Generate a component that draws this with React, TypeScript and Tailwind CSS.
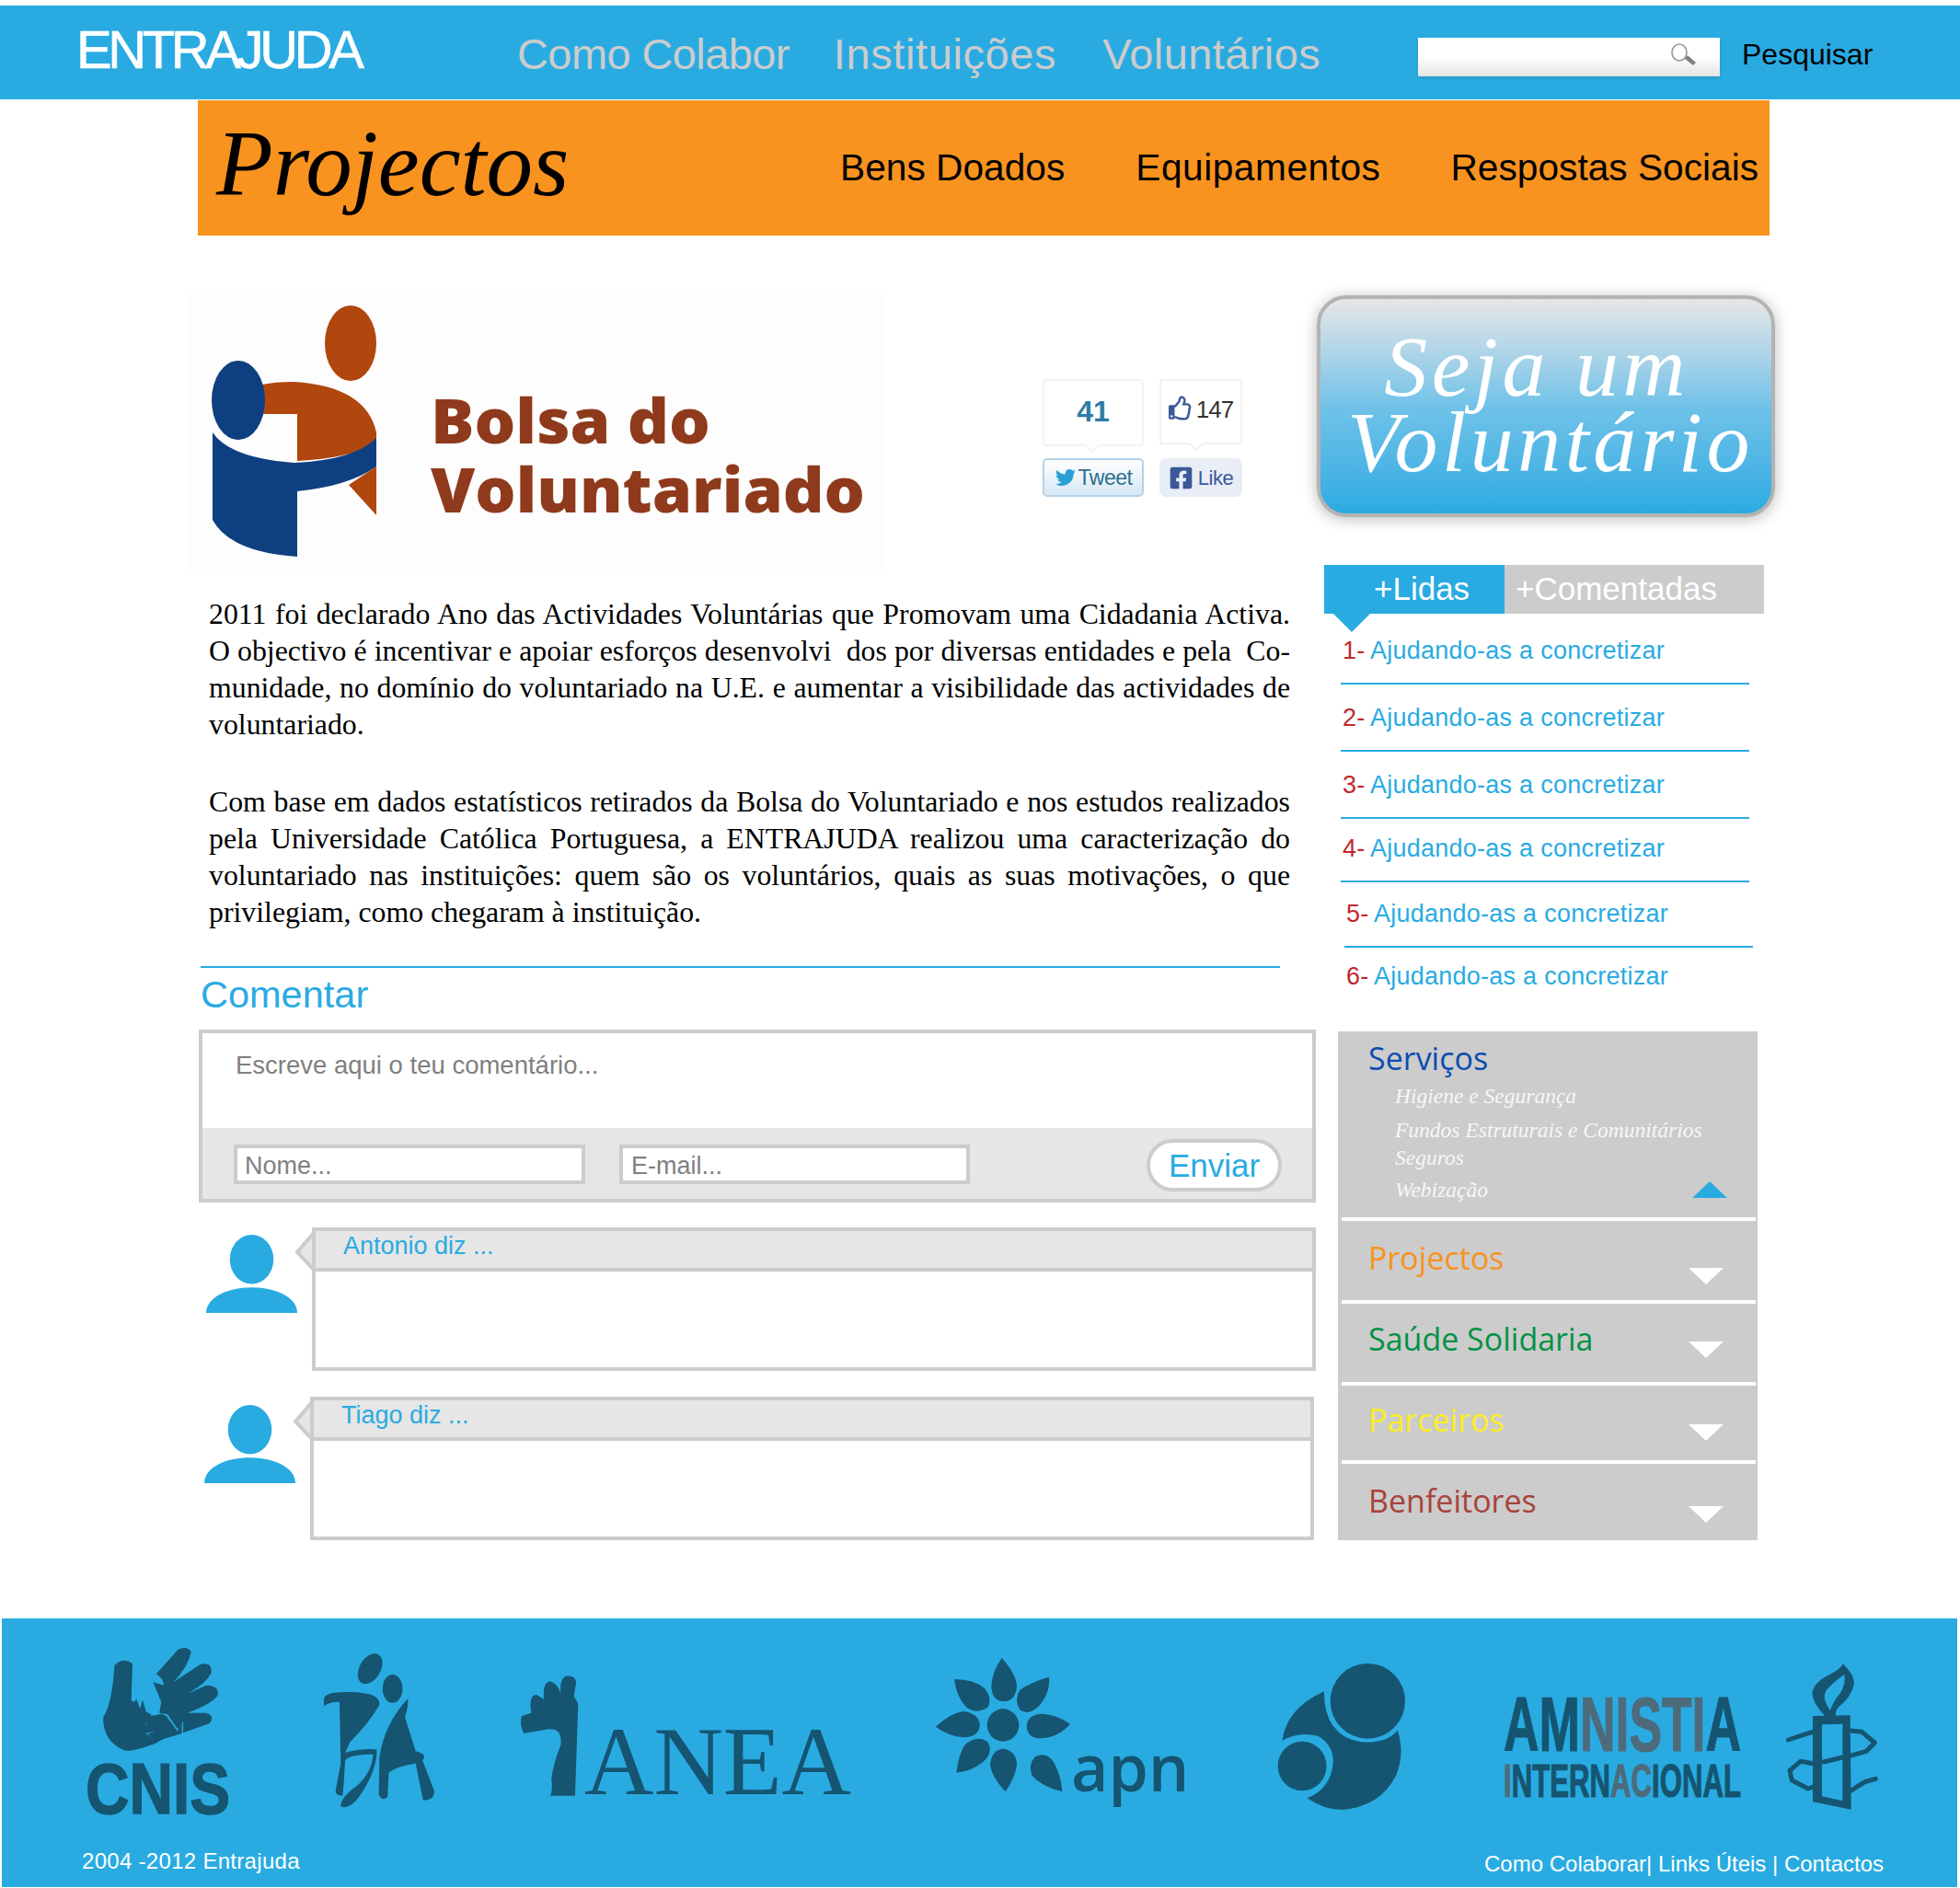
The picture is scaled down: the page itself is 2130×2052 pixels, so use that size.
import React from 'react';
import { FaTwitter, FaFacebookSquare, FaRegThumbsUp } from 'react-icons/fa';

const rankings = [
  { n: '1', row: 'h-[77px] pt-[23px] ml-0 border-b-2' },
  { n: '2', row: 'h-[73px] pt-[19px] ml-0 border-b-2' },
  { n: '3', row: 'h-[73px] pt-[19px] ml-0 border-b-2' },
  { n: '4', row: 'h-[69px] pt-[15px] ml-0 border-b-2' },
  { n: '5', row: 'h-[71px] pt-[17px] ml-[4px] border-b-2' },
  { n: '6', row: 'h-[91px] pt-[14px] ml-[4px]' },
];

const sections = [
  { title: 'Projectos', color: 'text-[#f7931e]', row: 'h-[90px] pt-[18px]', arrow: 'mt-[33px]' },
  { title: 'Saúde Solidaria', color: 'text-[#009245]', row: 'h-[89px] pt-[16px]', arrow: 'mt-[25px]' },
  { title: 'Parceiros', color: 'text-[#fcee21]', row: 'h-[85px] pt-[15px]', arrow: 'mt-[27px]' },
  { title: 'Benfeitores', color: 'text-[#a8433a]', row: 'h-[83px] pt-[18px]', arrow: 'mt-[28px]' },
];

const Person = ({ className }: { className: string }) => (
  <svg viewBox="0 0 100 90" preserveAspectRatio="none" className={className}>
    <ellipse cx="50" cy="28" rx="24" ry="28" fill="#29abe2" />
    <path d="M0 89C0 72 22 60 50 60S100 72 100 89Z" fill="#29abe2" />
  </svg>
);

const Comment = ({ author, className, avatar }: { author: string; className: string; avatar: string }) => (
  <div className={`flex items-start ${className}`}>
    <Person className={`w-[99px] h-[86px] shrink-0 ${avatar}`} />
    <div className="relative ml-[16px] w-[1091px]">
      <svg viewBox="0 0 24 48" className="absolute left-[-20px] top-0 w-[24px] h-[48px]">
        <path d="M22 2 L22 46 L4 27 L22 6" fill="#e6e6e6" stroke="#cccccc" strokeWidth="4" />
      </svg>
      <div className="h-[48px] border-4 border-[#cccccc] bg-[#e6e6e6] pl-[30px] text-[27px] leading-[32px] text-[#29abe2]">
        {author}
      </div>
      <div className="h-[108px] border-4 border-t-0 border-[#cccccc] bg-white" />
    </div>
  </div>
);

const BolsaLogo = () => (
  <svg viewBox="205 316 755 304" className="w-[755px] h-[304px] shrink-0 bg-[#fdfdfd]">
    <ellipse cx="381" cy="373" rx="28" ry="41" fill="#b0470f" />
    <path d="M240 440Q262 415 320 415Q398 420 409 470V482Q380 498 323 501V450H240Z" fill="#b0470f" />
    <path d="M231 470Q250 498 320 503Q385 500 409 476V507Q380 528 323 534V605Q250 600 231 565Z" fill="#0e3f80" />
    <path d="M409 507L379 527L409 560Z" fill="#b0470f" />
    <ellipse cx="259" cy="435" rx="29" ry="43" fill="#0e3f80" />
    <g fill="#8f3a1c" fontWeight="800" style={{ fontFamily: "'Open Sans', sans-serif" }}>
      <text x="468" y="482" fontSize="68" textLength="304" lengthAdjust="spacingAndGlyphs">Bolsa do</text>
      <text x="468" y="557" fontSize="68" textLength="472" lengthAdjust="spacingAndGlyphs">Voluntariado</text>
    </g>
  </svg>
);

const SocialButtons = () => (
  <div className="ml-[173px] mt-[96px] flex gap-[17px]">
    <div className="w-[110px]">
      <div className="relative h-[73px] rounded-[4px] border-2 border-[#eef5fa] pb-[4px] flex items-center justify-center text-[32px] leading-none font-bold text-[#2f7ca5]">
        41
        <span className="absolute bottom-[-7px] left-[46px] w-[12px] h-[12px] rotate-45 bg-white border-r-2 border-b-2 border-[#eef5fa]" />
      </div>
      <div className="mt-[13px] h-[42px] rounded-[5px] border-2 border-[#b5d2e6] bg-gradient-to-b from-white to-[#d6e7f3] flex items-center justify-center gap-[2px] text-[23px] tracking-[-0.5px] text-[#2d6f8f]">
        <FaTwitter className="text-[#2a9fd6] w-[24px] h-[22px]" />
        Tweet
      </div>
    </div>
    <div className="w-[90px]">
      <div className="relative h-[71px] border-2 border-[#f2f2f2] pt-[16px] flex justify-center gap-[4px] text-[26px] tracking-[-1px] leading-[30px] text-[#333333]">
        <FaRegThumbsUp className="text-[#3b5998] w-[26px] h-[27px]" />
        147
        <span className="absolute bottom-[-7px] left-[32px] w-[12px] h-[12px] rotate-45 bg-white border-r-2 border-b-2 border-[#f2f2f2]" />
      </div>
      <div className="mt-[15px] h-[42px] rounded-[7px] bg-[#e9edf6] flex items-center justify-center gap-[5px] text-[22px] tracking-[-0.5px] text-[#3b5998]">
        <FaFacebookSquare className="w-[27px] h-[27px]" />
        Like
      </div>
    </div>
  </div>
);

const paragraphs = [
  [
    '2011 foi declarado Ano das Actividades Voluntárias que Promovam uma Cidadania Activa.',
    'O objectivo é incentivar e apoiar esforços desenvolvi\u00a0\u00a0dos por diversas entidades e pela\u00a0 Co-',
    'munidade, no domínio do voluntariado na U.E. e aumentar a visibilidade das actividades de',
    'voluntariado.',
  ],
  [
    'Com base em dados estatísticos retirados da Bolsa do Voluntariado e nos estudos realizados',
    'pela Universidade Católica Portuguesa, a ENTRAJUDA realizou uma caracterização do',
    'voluntariado nas instituições: quem são os voluntários, quais as suas motivações, o que',
    'privilegiam, como chegaram à instituição.',
  ],
];

const FooterLogos = () => (
  <div className="flex items-start h-[240px]">
    {/* CNIS */}
    <svg viewBox="0 0 157 181" className="ml-[91px] mt-[32px] w-[157px] h-[181px] shrink-0 overflow-visible" fill="#155571">
      <g transform="translate(-93 -41) scale(.6793 .3333)">
        <path d="M183 180Q197 152 212 175L210 290Q214 310 218 288L224 322L228 292L234 332L242 340L233 372L248 395L233 402L252 432Q215 462 200 458Q165 430 165 350Q180 300 183 180Z" />
        <path d="M250 208L285 128Q298 115 306 135Q300 190 277 235L320 178Q340 165 338 205Q330 240 300 272L330 245Q352 245 348 280Q335 310 300 335L330 335Q345 345 335 370L293 400V362L285 390L268 340L255 335L258 300L245 235L262 245Q262 225 250 208Z" />
        <path d="M237 345L250 342L258 338L266 345L284 395L291 368L291 402L262 420L250 432L236 404L247 396L234 375Z" />
      </g>
      <text x="0" y="180" fontSize="78" fontWeight="700" stroke="#155571" strokeWidth="1.5" textLength="157" lengthAdjust="spacingAndGlyphs" style={{ fontFamily: "'Liberation Sans', sans-serif" }}>CNIS</text>
    </svg>
    {/* figuras */}
    <svg viewBox="518 142 177 503" preserveAspectRatio="none" className="ml-[102px] mt-[38px] w-[120px] h-[168px] shrink-0" fill="#155571">
      <ellipse cx="592" cy="192" rx="18" ry="50" transform="rotate(10 592 192)" />
      <ellipse cx="628" cy="257" rx="16" ry="46" />
      <path d="M518 290Q520 265 560 268Q610 270 607 310Q590 370 560 430L552 465Q580 450 603 455L602 470Q560 470 552 490L550 560L548 605Q535 605 537 585L545 500L543 300Q525 300 518 315Z" />
      <path d="M603 465Q600 540 570 620Q555 650 545 640Q545 610 570 575Q595 530 597 470Z" />
      <path d="M652 290Q655 300 648 350L665 460Q685 470 676 490L695 590Q695 620 677 620L665 500Q635 510 622 530L620 610Q610 625 606 600L607 480Q615 370 652 290Z" />
    </svg>
    {/* ANEA */}
    <svg viewBox="0 0 359 131" className="ml-[94px] mt-[62px] w-[359px] h-[131px] shrink-0 overflow-visible" fill="#155571">
      <g transform="translate(-566 -71) scale(.6793 .3333)">
        <path d="M905 215Q920 210 922 235L918 280L925 305L920 605H880Q885 590 882 550Q885 500 897 440Q900 385 878 388L838 402Q830 370 835 345L850 335Q845 280 858 275L870 290Q868 235 880 232Q892 240 897 270Q895 225 905 215Z" />
      </g>
      <text x="69" y="129" fontSize="106" textLength="290" lengthAdjust="spacingAndGlyphs" style={{ fontFamily: "'Liberation Serif', serif" }}>ANEA</text>
    </svg>
    {/* apn */}
    <svg viewBox="0 0 900 570" className="ml-[75px] mt-[31px] w-[300px] h-[190px] shrink-0 overflow-visible" fill="#155571">
      <path d="M266 36Q315 90 315 130Q310 178 272 178Q232 175 232 125Q235 80 266 36Z" />
      <path d="M420 98Q425 150 385 195Q350 225 325 205Q305 175 325 140Q360 115 420 98Z" />
      <path d="M489 252Q450 295 395 298Q350 300 347 258Q350 218 400 218Q450 222 489 252Z" />
      <path d="M463 472Q395 455 365 420Q350 385 375 358Q410 340 435 375Q460 420 463 472Z" />
      <path d="M278 472Q230 420 228 380Q235 333 272 332Q315 340 315 385Q310 425 278 472Z" />
      <path d="M118 410Q125 350 145 320Q185 285 220 310Q240 345 205 375Q170 405 118 410Z" />
      <path d="M50 260Q100 215 140 210Q190 215 195 255Q190 295 140 295Q95 292 50 260Z" />
      <path d="M111 105Q175 105 210 135Q235 165 222 195Q190 220 155 200Q120 170 111 105Z" />
      <ellipse cx="270" cy="255" rx="52" ry="53" />
      <text x="492" y="470" fontSize="210" fontWeight="600" textLength="385" lengthAdjust="spacingAndGlyphs" style={{ fontFamily: "'Open Sans', sans-serif" }}>apn</text>
    </svg>
    {/* circulos */}
    <svg viewBox="475 175 205 475" preserveAspectRatio="none" className="ml-[88px] mt-[49px] w-[139px] h-[159px] shrink-0" fill="#155571">
      <ellipse cx="620" cy="297" rx="60" ry="122" />
      <ellipse cx="515" cy="508" rx="39" ry="80" />
      <path d="M550 265Q490 320 483 425Q510 395 540 410Q575 450 560 540Q550 590 523 612Q550 650 578 650Q640 640 665 540Q680 470 668 392Q650 435 610 430Q550 410 550 265Z" />
    </svg>
    {/* Amnistia */}
    <svg viewBox="0 0 258 110" className="ml-[107px] mt-[84px] w-[258px] h-[110px] shrink-0 overflow-visible" fill="#155571" stroke="#155571" strokeWidth="1.2" fontWeight="700" style={{ fontFamily: "'Liberation Sans', sans-serif" }}>
      <text x="0" y="60" fontSize="84" textLength="258" lengthAdjust="spacingAndGlyphs">
        AM<tspan fill="#4d6b7b" stroke="#4d6b7b">NISTI</tspan>A
      </text>
      <text x="0" y="110" fontSize="50" textLength="258" lengthAdjust="spacingAndGlyphs">
        <tspan fill="#4d6b7b" stroke="#4d6b7b">I</tspan>NTERN<tspan fill="#4d6b7b" stroke="#4d6b7b">AC</tspan>IONAL
      </text>
    </svg>
    {/* vela */}
    <svg viewBox="0 0 420 540" className="ml-[28px] mt-[36px] w-[140px] h-[180px] shrink-0">
      <path fill="#155571" fillRule="evenodd" d="M248 40Q285 75 285 105Q275 150 235 180Q222 195 225 210H190Q150 170 148 135Q155 100 195 80Q240 60 248 40ZM253 75Q210 105 192 130Q180 155 207 193Q215 165 240 135Q258 105 253 75Z" />
      <path fill="#155571" fillRule="evenodd" d="M150 210L272 208L275 515L150 490ZM180 238L247 236V487L180 472Z" />
      <path fill="none" stroke="#155571" strokeWidth="15" strokeLinejoin="round" strokeLinecap="round" d="M70 288L130 268L150 262M272 258L310 262L352 297L325 325L272 340M247 345L185 360M150 365L110 358L75 388L82 420L135 447L150 442M272 455L320 425L355 415" />
    </svg>
  </div>
);

const App: React.FC = () => {
  return (
    <div className="w-[2130px] h-[2052px] bg-white overflow-hidden [font-family:'Liberation_Sans',sans-serif]">
      <div className="pt-[6px]">
        <header className="h-[102px] bg-[#29abe2] flex items-start">
          <div className="ml-[83px] mt-[16px] text-[58px] leading-[64px] tracking-[-4.4px] [-webkit-text-stroke:0.6px_white] text-white w-[479px]">ENTRAJUDA</div>
          <nav className="mt-[23px] w-[979px] flex text-[47px] leading-[60px] text-[#cccccc]">
            <span className="tracking-[-0.6px]">Como Colabor</span>
            <span className="ml-[48px] tracking-[0.6px]">Instituições</span>
            <span className="ml-[50px] tracking-[0.4px]">Voluntários</span>
          </nav>
          <div className="relative mt-[35px] w-[328px] h-[42px] bg-gradient-to-b from-white via-white to-[#e3e3e3] shadow-[0_2px_4px_rgba(0,0,0,0.12)]">
            <svg viewBox="0 0 32 28" className="absolute left-[273px] top-[5px] w-[32px] h-[28px]">
              <ellipse cx="11" cy="11" rx="8" ry="9" fill="none" stroke="#999999" strokeWidth="1.6" />
              <path d="M17 18L26 25L29 22L20 14Z" fill="#808080" />
            </svg>
          </div>
          <div className="ml-[24px] mt-[33px] text-[32px] leading-[40px] text-black">Pesquisar</div>
        </header>
      </div>

      <div className="ml-[215px] mt-px w-[1708px] h-[147px] bg-[#f9931f] flex items-start">
        <h1 className="ml-[20px] mt-[9px] w-[678px] text-[101px] leading-[120px] italic text-black [font-family:'Liberation_Serif',serif]">
          Projectos
        </h1>
        <nav className="mt-[48px] flex text-[40.7px] leading-[50px] text-black">
          <span>Bens Doados</span>
          <span className="ml-[77px] tracking-[0.5px]">Equipamentos</span>
          <span className="ml-[76px]">Respostas Sociais</span>
        </nav>
      </div>

      <main className="flex items-start">
        <div className="ml-[205px] w-[1226px]">
          <div className="mt-[60px] flex items-start">
            <BolsaLogo />
            <SocialButtons />
          </div>

          <article className="ml-[22px] mt-[28px] w-[1175px] text-[31.8px] leading-[40px] text-black [font-family:'Liberation_Serif',serif]">
            {paragraphs.map((lines, i) => (
              <p key={i} className={i ? 'mt-[44px]' : ''}>
                {lines.map((line, j) => (
                  <span key={j} className={j < 3 ? 'block text-justify [text-align-last:justify] whitespace-nowrap' : 'block'}>
                    {line}
                  </span>
                ))}
              </p>
            ))}
          </article>

          <div className="ml-[13px] mt-[38px] w-[1173px] h-[2px] bg-[#29abe2]" />
          <h2 className="ml-[13px] mt-[3px] text-[41.5px] leading-[52px] text-[#29abe2]">Comentar</h2>

          <form className="ml-[11px] mt-[12px] w-[1214px] h-[188px] border-4 border-[#cccccc] flex flex-col">
            <textarea
              placeholder="Escreve aqui o teu comentário..."
              className="h-[103px] resize-none bg-white pl-[36px] pt-[19px] text-[27.5px] leading-[32px] placeholder:text-[#808080] outline-none"
            />
            <div className="flex-1 bg-[#e6e6e6] flex items-start">
              <input
                placeholder="Nome..."
                className="ml-[34px] mt-[18px] w-[382px] h-[43px] border-4 border-[#cccccc] bg-white pl-[8px] pt-[3px] text-[27px] placeholder:text-[#808080] outline-none"
              />
              <input
                placeholder="E-mail..."
                className="ml-[37px] mt-[18px] w-[381px] h-[43px] border-4 border-[#cccccc] bg-white pl-[9px] pt-[3px] text-[27px] placeholder:text-[#808080] outline-none"
              />
              <button type="button" className="ml-[192px] mt-[12px] w-[147px] h-[57px] rounded-[29px] border-4 border-[#cccccc] bg-white text-[35px] leading-[44px] text-[#29abe2]">
                Enviar
              </button>
            </div>
          </form>

          <Comment author="Antonio diz ..." className="ml-[19px] mt-[27px]" avatar="mt-[8px]" />
          <Comment author="Tiago diz ..." className="ml-[17px] mt-[28px]" avatar="mt-[9px]" />
        </div>

        <aside className="w-[500px]">
          <div className="mt-[65px] w-[498px] h-[241px] rounded-[32px] border-4 border-[#b3b3b3] bg-gradient-to-b from-[#e6e6e6] via-[#6fc2e8] via-50% to-[#29abe2] shadow-[0_2px_16px_rgba(0,0,0,0.28)] pt-[32px] text-center text-[94px] leading-[82px] tracking-[4.5px] italic text-white [font-family:'Liberation_Serif',serif]">
            <div className="pr-[20px]">Seja um</div>
            <div className="pl-[10px]">Voluntário</div>
          </div>

          <div className="relative ml-[8px] mt-[52px] w-[478px] h-[53px] bg-[#cccccc] flex text-[35px] leading-[52px] text-white">
            <div className="w-[196px] bg-[#29abe2] pl-[54px]">+Lidas</div>
            <div className="pl-[12px]">+Comentadas</div>
            <svg viewBox="0 0 40 20" className="absolute left-[10px] top-[53px] w-[40px] h-[20px]">
              <path d="M0 0H40L20 20Z" fill="#29abe2" />
            </svg>
          </div>

          <ul className="ml-[26px] w-[448px]">
            {rankings.map((r) => (
              <li key={r.n} className={`${r.row} w-[444px] border-[#29abe2] text-[27px] leading-[34px] tracking-[0.25px] text-[#29abe2]`}>
                <span className="inline-block w-[32px] pl-[2px] text-[#c1272d]">{r.n}-</span>
                Ajudando-as a concretizar
              </li>
            ))}
          </ul>

          <div className="ml-[23px] w-[456px] h-[553px] bg-[#cccccc] pl-[4px] pr-[2px] [font-family:'Open_Sans',sans-serif]">
            <div className="relative h-[206px] border-b-4 border-white pl-[29px] pt-[7px]">
              <h3 className="text-[34px] leading-[44px] text-[#0b4db0]">Serviços</h3>
              <ul className="ml-[29px] mt-[3px] text-[23.5px] italic text-[#f7f7f7] [font-family:'Liberation_Serif',serif]">
                <li className="leading-[32px]">Higiene e Segurança</li>
                <li className="mt-[6px] leading-[30px]">Fundos Estruturais e Comunitários</li>
                <li className="leading-[30px]">Seguros</li>
                <li className="mt-[4px] leading-[32px]">Webização</li>
              </ul>
              <svg viewBox="0 0 38 18" className="absolute left-[381px] top-[163px] w-[38px] h-[18px]">
                <path d="M0 18L19 0L38 18Z" fill="#29abe2" />
              </svg>
            </div>
            {sections.map((s, i) => (
              <div
                key={s.title}
                className={`${s.row} ${i < 3 ? 'border-b-4 border-white' : ''} pl-[29px] flex items-start justify-between pr-[35px]`}
              >
                <span className={`text-[34px] leading-[44px] ${s.color}`}>{s.title}</span>
                <svg viewBox="0 0 38 18" className={`${s.arrow} w-[38px] h-[18px]`}>
                  <path d="M0 0L19 18L38 0Z" fill="#ffffff" />
                </svg>
              </div>
            ))}
          </div>
        </aside>
      </main>

      <footer className="ml-[2px] mt-[85px] w-[2125px] h-[292px] bg-[#29abe2] text-white">
        <FooterLogos />
        <div className="flex justify-between pl-[87px] pr-[80px] text-[24px] leading-[30px]">
          <span className="mt-[9px] tracking-[0.3px]">2004 -2012 Entrajuda</span>
          <span className="mt-[12px]">Como Colaborar| Links Úteis | Contactos</span>
        </div>
      </footer>
    </div>
  );
};

export default App;
